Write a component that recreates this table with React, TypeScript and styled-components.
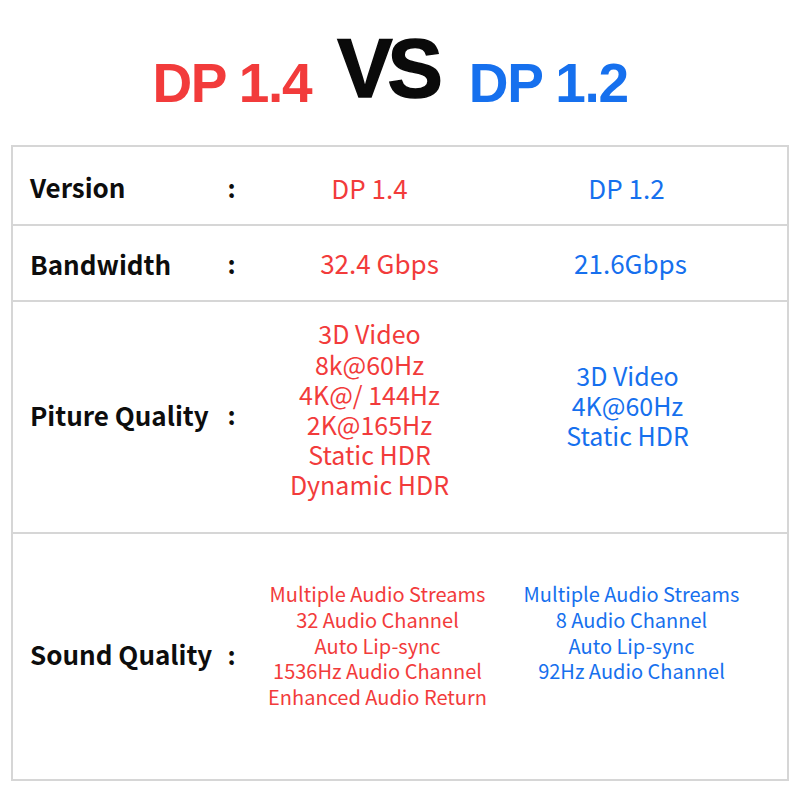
import styled, { createGlobalStyle } from "styled-components";

const RED = "#f23b3b";
const BLUE = "#1670ee";

type Row = {
  label: string;
  dp14: string[];
  dp12: string[];
  height: number;
  size: number;
  lineHeight: number;
  align: "center" | "start";
  lift: number;
  labelLift: number;
  shift14: number;
  shift12: number;
  lift12: number;
};

const rows: Row[] = [
  {
    label: "Version",
    dp14: ["DP 1.4"],
    dp12: ["DP 1.2"],
    height: 77,
    size: 26,
    lineHeight: 30,
    align: "center",
    lift: -2,
    labelLift: -1,
    shift14: 2,
    shift12: 2,
    lift12: 0,
  },
  {
    label: "Bandwidth",
    dp14: ["32.4 Gbps"],
    dp12: ["21.6Gbps"],
    height: 76,
    size: 26,
    lineHeight: 30,
    align: "center",
    lift: 0,
    labelLift: 0,
    shift14: 22,
    shift12: 10,
    lift12: 0,
  },
  {
    label: "Piture Quality",
    dp14: ["3D Video", "8k@60Hz", "4K@/ 144Hz", "2K@165Hz", "Static HDR", "Dynamic HDR"],
    dp12: ["3D Video", "4K@60Hz", "Static HDR"],
    height: 232,
    size: 25,
    lineHeight: 30.2,
    align: "center",
    lift: 8,
    labelLift: 3,
    shift14: 2,
    shift12: 4,
    lift12: 4,
  },
  {
    label: "Sound Quality",
    dp14: [
      "Multiple Audio Streams",
      "32 Audio Channel",
      "Auto Lip-sync",
      "1536Hz Audio Channel",
      "Enhanced Audio Return",
    ],
    dp12: ["Multiple Audio Streams", "8 Audio Channel", "Auto Lip-sync", "92Hz Audio Channel"],
    height: 247,
    size: 20,
    lineHeight: 25.7,
    align: "start",
    lift: 11,
    labelLift: 3,
    shift14: 18,
    shift12: 12,
    lift12: 0,
  },
];

export default function App() {
  return (
    <>
      <GlobalStyle />
      <Page>
        <Title>
          <Version $color={RED}>DP 1.4</Version>
          <Vs>VS</Vs>
          <Version $color={BLUE}>DP 1.2</Version>
        </Title>
        <Table>
          {rows.map((row) => (
            <TableRow key={row.label} $height={row.height}>
              <Label $lift={row.labelLift}>{row.label}</Label>
              <Colon $lift={row.labelLift}>:</Colon>
              <Values $align={row.align} $lift={row.lift}>
                <Cell $color={RED} $size={row.size} $lh={row.lineHeight} $shift={row.shift14} $lift={0}>
                  {row.dp14.map((line) => (
                    <div key={line}>{line}</div>
                  ))}
                </Cell>
                <Cell
                  $color={BLUE}
                  $size={row.size}
                  $lh={row.lineHeight}
                  $shift={row.shift12}
                  $lift={row.lift12}
                >
                  {row.dp12.map((line) => (
                    <div key={line}>{line}</div>
                  ))}
                </Cell>
              </Values>
            </TableRow>
          ))}
        </Table>
      </Page>
    </>
  );
}

const GlobalStyle = createGlobalStyle`
  body {
    margin: 0;
    background: #ffffff;
    font-family: "Noto Sans CJK SC", "Noto Sans", sans-serif;
  }
`;

const Page = styled.div`
  width: 800px;
  height: 800px;
  background: #ffffff;
  padding: 0 11px;
  box-sizing: border-box;
`;

const Title = styled.div`
  height: 145px;
  display: flex;
  justify-content: center;
  align-items: baseline;
  gap: 26px;
  padding: 32px 20px 0 0;
  box-sizing: border-box;
  font-family: "Liberation Sans", Arial, sans-serif;
  font-weight: bold;
  line-height: 1;
`;

const Version = styled.span<{ $color: string }>`
  color: ${(p) => p.$color};
  font-size: 55px;
  letter-spacing: -1.4px;
`;

const Vs = styled.span`
  color: #0a0a0a;
  font-size: 83px;
  letter-spacing: -5px;
  margin-right: 5px;
  -webkit-text-stroke: 1.5px #0a0a0a;
  transform: translateY(-5px);
`;

const Table = styled.div`
  border: 2px solid #d6d6d6;
  display: flex;
  flex-direction: column;
`;

const TableRow = styled.div<{ $height: number }>`
  height: ${(p) => p.$height}px;
  display: grid;
  grid-template-columns: 193px 17px 514px;
  align-items: center;
  padding-left: 17px;
  box-sizing: border-box;

  & + & {
    border-top: 2px solid #d6d6d6;
  }
`;

const Label = styled.div<{ $lift: number }>`
  font-size: 26px;
  font-weight: bold;
  color: #0d0d0d;
  white-space: nowrap;
  margin-bottom: ${(p) => p.$lift * 2}px;
`;

const Colon = styled.div<{ $lift: number }>`
  font-size: 25px;
  font-weight: bold;
  color: #0d0d0d;
  text-align: center;
  margin-bottom: ${(p) => p.$lift * 2}px;
`;

const Values = styled.div<{ $align: "center" | "start"; $lift: number }>`
  display: grid;
  grid-template-columns: 257px 257px;
  align-items: ${(p) => p.$align};
  margin-bottom: ${(p) => p.$lift * 2}px;
`;

const Cell = styled.div<{ $color: string; $size: number; $lh: number; $shift: number; $lift: number }>`
  color: ${(p) => p.$color};
  font-size: ${(p) => p.$size}px;
  line-height: ${(p) => p.$lh}px;
  text-align: center;
  white-space: nowrap;
  padding-left: ${(p) => p.$shift}px;
  margin-bottom: ${(p) => p.$lift * 2}px;
`;
